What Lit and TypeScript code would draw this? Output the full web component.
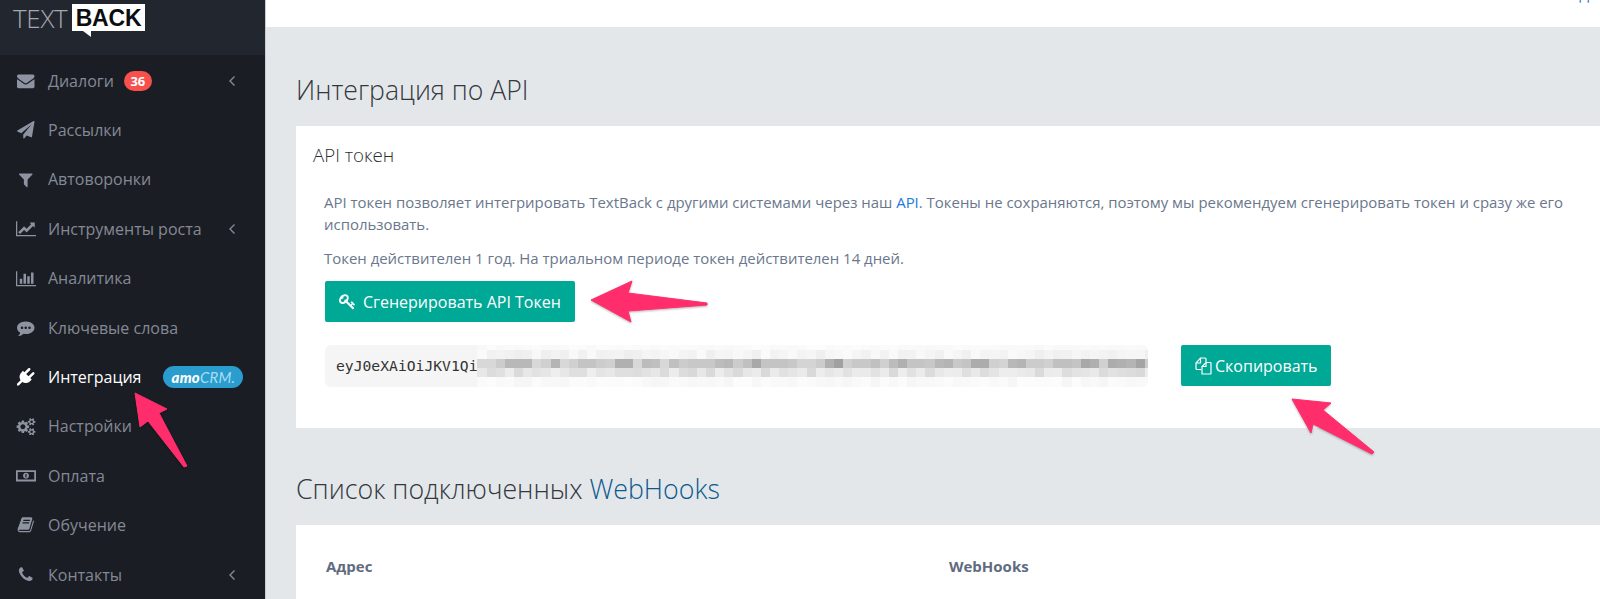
import { LitElement, html, css, svg } from "lit";
import { customElement } from "lit/decorators.js";

const ICONS: Record<string, [number, number, string]> = {
  envelope: [1792, 1792, "M1792 710v794q0 66-47 113t-113 47h-1472q-66 0-113-47t-47-113v-794q44 49 101 87 362 246 497 345 57 42 92.5 65.5t94.5 48 110 24.5h2q51 0 110-24.5t94.5-48 92.5-65.5q170-123 498-345 57-39 100-87zm0-294q0 79-49 151t-122 123q-376 261-468 325-10 7-42.5 30.5t-54 38-52 32.5-57.5 27-50 9h-2q-23 0-50-9t-57.5-27-52-32.5-54-38-42.5-30.5q-91-64-262-182.5t-205-142.5q-62-42-117-115.5t-55-136.5q0-78 41.5-130t118.5-52h1472q65 0 112.5 47t47.5 113z"],
  plane: [1792, 1792, "M1764 11q33 24 27 64l-256 1536q-5 29-32 45-14 8-31 8-11 0-24-5l-453-185-242 295q-18 23-49 23-13 0-22-4-19-7-30.5-23.5t-11.5-36.5v-349l864-1059-1069 925-395-162q-37-14-40-55-2-40 32-59l1664-960q15-9 32-9 20 0 36 11z"],
  filter: [1792, 1792, "M1595 295q17 41-14 70l-493 493v742q0 42-39 59-13 5-25 5-27 0-45-19l-256-256q-19-19-19-45v-486l-493-493q-31-29-14-70 17-39 59-39h1280q42 0 59 39z"],
  line: [2048, 1792, "M2048 1536v128h-2048v-1536h128v1408h1920zm-128-1248v435q0 21-19.5 29.5t-35.5-7.5l-121-121-633 633q-10 10-23 10t-23-10l-233-233-416 416-192-192 585-585q10-10 23-10t23 10l233 233 464-464-121-121q-16-16-7.5-35.5t29.5-19.5h435q14 0 23 9t9 23z"],
  bar: [2048, 1792, "M640 896v512h-256v-512h256zm384-512v1024h-256v-1024h256zm1024 1152v128h-2048v-1536h128v1408h1920zm-640-896v768h-256v-768h256zm384-384v1152h-256v-1152h256z"],
  comment: [1792, 1792, "M640 896q0-53-37.5-90.5t-90.5-37.5-90.5 37.5-37.5 90.5 37.5 90.5 90.5 37.5 90.5-37.5 37.5-90.5zm384 0q0-53-37.5-90.5t-90.5-37.5-90.5 37.5-37.5 90.5 37.5 90.5 90.5 37.5 90.5-37.5 37.5-90.5zm384 0q0-53-37.5-90.5t-90.5-37.5-90.5 37.5-37.5 90.5 37.5 90.5 90.5 37.5 90.5-37.5 37.5-90.5zm384 0q0 174-120 321.5t-326 233-450 85.5q-110 0-211-18-173 173-435 229-52 10-86 13-12 1-22-6t-13-18q-4-15 20-37 5-5 23.5-21.5t25.5-23.5 23.5-25.5 24-31.5 20.5-37 20-48 14.5-57.5 12.5-72.5q-146-90-229.5-216.5t-83.5-269.5q0-174 120-321.5t326-233 450-85.5 450 85.5 326 233 120 321.5z"],
  plug: [1792, 1792, "M1755 453q37 38 37 90.5t-37 90.5l-401 400 150 150-160 160q-163 163-389.5 186.5t-411.5-100.5l-362 362h-181v-181l362-362q-124-185-100.5-411.5t186.5-389.5l160-160 150 150 400-401q38-37 91-37t90 37 37 90.5-37 90.5l-400 401 234 234 401-400q38-37 91-37t90 37z"],
  cogs: [1920, 1792, "M896 896q0-106-75-181t-181-75-181 75-75 181 75 181 181 75 181-75 75-181zm768 512q0-52-38-90t-90-38-90 38-38 90q0 53 37.5 90.5t90.5 37.5 90.5-37.5 37.5-90.5zm0-1024q0-52-38-90t-90-38-90 38-38 90q0 53 37.5 90.5t90.5 37.5 90.5-37.5 37.5-90.5zm-384 421v185q0 10-7 19.5t-16 10.5l-155 24q-11 35-32 76 34 48 90 115 7 11 7 20 0 12-7 19-23 30-82.5 89.5t-78.5 59.5q-11 0-21-7l-115-90q-37 19-77 31-11 108-23 155-7 24-30 24h-186q-11 0-20-7.5t-10-17.5l-23-153q-34-10-75-31l-118 89q-7 7-20 7-11 0-21-8-144-133-144-160 0-9 7-19 10-14 41-53t47-61q-23-44-35-82l-152-24q-10-1-17-9.5t-7-19.5v-185q0-10 7-19.5t16-10.5l155-24q11-35 32-76-34-48-90-115-7-11-7-20 0-12 7-20 22-30 82-89t79-59q11 0 21 7l115 90q34-18 77-32 11-108 23-154 7-24 30-24h186q11 0 20 7.5t10 17.5l23 153q34 10 75 31l118-89q8-7 20-7 11 0 21 8 144 133 144 160 0 8-7 19-12 16-42 54t-45 60q23 48 34 82l152 23q10 2 17 10.5t7 19.5zm640 533v140q0 16-149 31-12 27-30 52 51 113 51 138 0 4-4 7-122 71-124 71-8 0-46-47t-52-68q-20 2-30 2t-30-2q-14 21-52 68t-46 47q-2 0-124-71-4-3-4-7 0-25 51-138-18-25-30-52-149-15-149-31v-140q0-16 149-31 13-29 30-52-51-113-51-138 0-4 4-7 4-2 35-20t59-34 30-16q8 0 46 46.5t52 67.5q20-2 30-2t30 2q51-71 92-112l6-2q4 0 124 70 4 3 4 7 0 25-51 138 17 23 30 52 149 15 149 31zm0-1024v140q0 16-149 31-12 27-30 52 51 113 51 138 0 4-4 7-122 71-124 71-8 0-46-47t-52-68q-20 2-30 2t-30-2q-14 21-52 68t-46 47q-2 0-124-71-4-3-4-7 0-25 51-138-18-25-30-52-149-15-149-31v-140q0-16 149-31 13-29 30-52-51-113-51-138 0-4 4-7 4-2 35-20t59-34 30-16q8 0 46 46.5t52 67.5q20-2 30-2t30 2q51-71 92-112l6-2q4 0 124 70 4 3 4 7 0 25-51 138 17 23 30 52 149 15 149 31z"],
  money: [2048, 1792, "M0 320h2048v1152h-2048zM180 500v792h1688v-792zM1024 590a306 306 0 1 0 .1 0zM960 720h120v352h-120z"],
  book: [1792, 1792, "M1703 478q40 57 18 129l-275 906q-19 64-76.5 107.5t-122.5 43.5h-923q-77 0-148.5-53.5t-99.5-131.5q-24-67-2-127 0-4 3-27t4-37q1-8-3-21.5t-3-19.5q2-11 8-21t16.5-23.5 16.5-23.5q23-38 45-91.5t30-91.5q3-10 .5-30t-.5-28q3-11 17-28t17-23q21-36 42-92t25-90q1-9-2.5-32t.5-28q4-13 22-30.5t22-22.5q19-26 42.5-84.5t27.5-96.5q1-8-3-25.5t-2-26.5q2-8 9-18t18-23 17-21q8-12 16.5-30.5t15-35 16-36 19.5-32 26.5-23.5 36-11.5 47.5 5.5l-1 3q38-9 51-9h761q74 0 114 56t18 130l-274 906q-36 119-71.5 153.5t-128.5 34.5h-869q-27 0-38 15-11 16-1 43 24 70 144 70h923q29 0 56-15.5t35-41.5l300-987q7-22 5-57 38 15 59 43zm-1064 2q-4 13 2 22.5t20 9.5h608q13 0 25.5-9.5t16.5-22.5l21-64q4-13-2-22.5t-20-9.5h-608q-13 0-25.5 9.5t-16.5 22.5zm-83 256q-4 13 2 22.5t20 9.5h608q13 0 25.5-9.5t16.5-22.5l21-64q4-13-2-22.5t-20-9.5h-608q-13 0-25.5 9.5t-16.5 22.5z"],
  phone: [1792, 1792, "M1600 1240q0 27-10 70.5t-21 68.5q-21 50-122 106-94 51-186 51-27 0-53-3.5t-57.5-12.5-47-14.5-55.5-20.5-49-18q-98-35-175-83-127-79-264-216t-216-264q-48-77-83-175-3-9-18-49t-20.5-55.5-14.5-47-12.5-57.5-3.5-53q0-92 51-186 56-101 106-122 25-11 68.5-21t70.5-10q14 0 21 3 18 6 53 76 11 19 30 54t35 63.5 31 53.5q3 4 17.5 25t21.5 35.5 7 28.5q0 20-28.5 50t-62 55-62 53-28.5 46q0 9 5 22.5t8.5 20.5 14 24 11.5 19q76 137 174 235t235 174q2 1 19 11.5t24 14 20.5 8.5 22.5 5q18 0 46-28.5t53-62 55-62 50-28.5q14 0 28.5 7t35.5 21.5 25 17.5q25 15 53.5 31t63.5 35 54 30q70 35 76 53 3 7 3 21z"],
  key: [1792, 1792, "M832 512q0-80-56-136t-136-56-136 56-56 136q0 42 19 83-41-19-83-19-80 0-136 56t-56 136 56 136 136 56 136-56 56-136q0-42-19-83 41 19 83 19 80 0 136-56t56-136zm851 704q0 17-49 66t-66 49q-9 0-28.5-16t-36.5-33-38.5-40-24.5-26l-96 96 220 220q28 28 28 68 0 42-39 81t-81 39q-40 0-68-28l-671-671q-176 131-365 131-163 0-265.5-102.5t-102.5-265.5q0-160 95-313t248-248 313-95q163 0 265.5 102.5t102.5 265.5q0 189-131 365l355 355 96-96q-3-3-26-24.5t-40-38.5-33-36.5-16-28.5q0-17 49-66t66-49q13 0 23 10 6 6 46 44.5t82 79.5 86.5 86 73 78 28.5 41z"],
};

const icon = (name: string, cls = "ic") => {
  const [w, h, d] = ICONS[name];
  const wide = w > 1792 ? " wide" : "";
  return html`<svg class="${cls}${wide}" viewBox="0 0 ${w} ${h}" fill="currentColor" fill-rule="evenodd"><path d=${d}></path></svg>`;
};

type Item = { label: string; icon: string; chev?: boolean; badge?: string; active?: boolean; amo?: boolean };
const ITEMS: Item[] = [
  { label: "Диалоги", icon: "envelope", chev: true, badge: "36" },
  { label: "Рассылки", icon: "plane" },
  { label: "Автоворонки", icon: "filter" },
  { label: "Инструменты роста", icon: "line", chev: true },
  { label: "Аналитика", icon: "bar" },
  { label: "Ключевые слова", icon: "comment" },
  { label: "Интеграция", icon: "plug", active: true, amo: true },
  { label: "Настройки", icon: "cogs" },
  { label: "Оплата", icon: "money" },
  { label: "Обучение", icon: "book" },
  { label: "Контакты", icon: "phone", chev: true },
];

const DARK = "d8,d8,cc,b8,b8,b8,d8,d0,b4,d8,d0,c4,c4,cc,d0,b0,b0,d8,bc,c0,d8,c0,cc,c8,c8,c8,bc,b8,cc,c0,a8,c4,c4,c4,c8,d4,d4,cc,b0,a0,d0,c8,c8,c0,d0,bc,b0,c4,c4,c8,b8,b4,c8,c4,ac,ac,d0,d4,b8,b4,cc,cc,d0,c0,c0,c4,a8,b0,d0,ac,b0,b4,a4,cc".split(",");
const noise = (r: number, c: number) => {
  const x = Math.sin(r * 91.7 + c * 12.9898) * 43758.5453;
  return x - Math.floor(x);
};
const grey = (v: number) => `rgb(${v},${v},${v})`;
const blurRows: string[][] = [
  DARK.map((_, c) => grey(Math.round(248 + noise(0, c) * 4))),
  DARK.map((_, c) => grey(Math.round(238 + noise(1, c) * 12))),
  DARK.map((v) => "#" + v + v + v),
  DARK.map((_, c) => grey(Math.round(216 + noise(3, c) * 22))),
  DARK.map((_, c) => grey(Math.round(246 + noise(4, c) * 6))),
];

@customElement("app-root")
export class AppRoot extends LitElement {
  static styles = css`
    :host {
      display: block;
      position: relative;
      height: 599px;
      width: 1600px;
      overflow: hidden;
      font-family: "Open Sans", sans-serif;
      background: #e4e7ea;
    }
    .layout { display: flex; height: 100%; }
    .side {
      width: 265px;
      flex: none;
      background: #1a1d24;
      border-right: 1px solid #c9ccd1;
      display: flex;
      flex-direction: column;
      overflow: hidden;
    }
    .logo {
      height: 55px;
      flex: none;
      background: #22262e;
      display: flex;
      align-items: flex-start;
      padding: 4px 0 0 13px;
      box-sizing: border-box;
      gap: 7px;
    }
    .logo-text {
      font-weight: 300;
      font-size: 26px;
      line-height: 28px;
      width: 52px;
      color: #a4a7ad;
      letter-spacing: -0.3px;
    }
    .logo-back {
      position: relative;
      background: #fff;
      color: #0c0d10;
      font-family: "Liberation Sans", sans-serif;
      font-weight: 700;
      font-size: 23px;
      line-height: 29px;
      width: 73px;
      height: 27px;
      text-align: center;
      letter-spacing: -0.2px;
    }
    .logo-back::after {
      content: "";
      position: absolute;
      left: 11px;
      top: 27px;
      border-style: solid;
      border-width: 0 8px 6px 0;
      border-color: transparent #fff transparent transparent;
    }
    .nav { display: flex; flex-direction: column; margin-top: 1px; }
    .row {
      height: 49.4px;
      display: flex;
      align-items: center;
      color: #858994;
      font-size: 16px;
      padding-left: 16px;
      position: relative;
    }
    .row.active { color: #fff; }
    .icbox { width: 20px; height: 20px; margin-right: 12px; display: flex; align-items: center; justify-content: center; color: #8e93a1; flex: none; }
    .row.active .icbox { color: #fff; }
    .ic { width: 17.5px; height: 17.5px; display: block; flex: none; }
    .ic.wide { width: 20px; }
    .badge {
      margin-left: 10px;
      background: #f8504d;
      color: #fff;
      font-size: 13px;
      font-weight: 700;
      height: 20px;
      width: 28px;
      border-radius: 10px;
      text-align: center;
      line-height: 20px;
    }
    .chev { position: absolute; left: 228px; top: 50%; margin-top: -6px; width: 8px; height: 12px; stroke: #858994; fill: none; stroke-width: 1.4; }
    .amo {
      margin-left: 22px;
      width: 80px;
      height: 22px;
      border-radius: 11px;
      background: #2a9ccd;
      text-align: center;
      font-family: "Lato", sans-serif;
      font-style: italic;
      font-weight: 900;
      font-size: 15px;
      line-height: 22px;
      color: #fff;
      letter-spacing: 0.2px;
    }
    .amo span { color: #a6def5; font-weight: 400; }

    .main { flex: 1; min-width: 0; display: flex; flex-direction: column; }
    .topbar {
      height: 27px;
      flex: none;
      background: #fff;
      overflow: hidden;
      display: flex;
      justify-content: flex-end;
      padding-right: 11px;
    }
    .topbar a { color: #2a7ab8; font-size: 14px; line-height: 14px; margin-top: -12px; }
    .content { padding-left: 30px; }
    h1 {
      margin: 0;
      font-weight: 300;
      font-size: 26.6px;
      line-height: 36px;
      color: #33383f;
      padding-top: 45px;
      padding-bottom: 18px;
    }
    h1 a { color: #0b5a8e; }
    h1.second { padding-top: 43px; padding-bottom: 18px; font-size: 26.75px; }
    .card { background: #fff; }
    .card.token { height: 302px; box-sizing: border-box; padding: 17px 0 0 17px; }
    .card-title { font-size: 18.7px; line-height: 24px; color: #2c3036; margin-bottom: 24px; font-weight: 300; }
    .card-body { padding: 0 25px 0 11px; font-size: 14.95px; line-height: 22px; color: #6a778c; }
    .card-body p { margin: 0 0 12px; }
    .card-body a { color: #1c7cd6; }
    .btn {
      display: inline-flex;
      align-items: center;
      background: #00a896;
      color: #fff;
      border-radius: 2px;
      font-size: 16px;
      height: 41px;
      box-sizing: border-box;
    }
    .btn.gen { width: 250px; padding-left: 14px; margin-top: 0; margin-left: 1px; }
    .btn.gen .ic { width: 17px; height: 17px; margin-right: 7px; }
    .token-row { display: flex; margin-top: 23px; margin-left: 1px; align-items: flex-start; }
    .field {
      width: 823px;
      height: 42px;
      background: #f5f5f5;
      border-radius: 6px;
      display: flex;
      overflow: hidden;
      flex: none;
      align-items: stretch;
    }
    .mono {
      font-family: "DejaVu Sans Mono", monospace;
      font-size: 14.7px;
      color: #333;
      padding-left: 11px;
      line-height: 42px;
      flex: none;
    }
    .blur { display: flex; flex-direction: column; flex: 1; overflow: hidden; background: #fafafa; }
    .blur-row { display: flex; flex: none; }
    .cell { width: 9.15px; flex: none; }
    .btn.copy { width: 150px; margin-left: 33px; padding-left: 14px; gap: 3px; }
    .copy-ic { width: 17px; height: 18px; stroke: #fff; fill: none; stroke-width: 1.2; flex: none; }
    .card.hooks { height: 80px; padding: 30px 0 0 30px; display: flex; font-size: 15px; font-weight: 700; color: #5f6b80; line-height: 22px; }
    .th1 { width: 623px; }
    .overlay { position: absolute; left: 0; top: 0; width: 1600px; height: 599px; pointer-events: none; }
    .arrow { fill: #ff2d6b; stroke: #ff2d6b; stroke-width: 1; stroke-linejoin: round; filter: drop-shadow(0 1px 1px rgba(0,0,0,.3)); }
  `;

  private renderRow(i: Item) {
    return html`<div class="row ${i.active ? "active" : ""}">
      <span class="icbox">${icon(i.icon)}</span>
      <span>${i.label}</span>
      ${i.badge ? html`<span class="badge">${i.badge}</span>` : ""}
      ${i.amo ? html`<span class="amo">amo<span>CRM.</span></span>` : ""}
      ${i.chev ? html`<svg class="chev" viewBox="0 0 8 12"><path d="M6.5 1.5 L2 6 L6.5 10.5"></path></svg>` : ""}
    </div>`;
  }

  render() {
    const heights = [5, 9, 9, 9, 10];
    return html`
      <div class="layout">
        <aside class="side">
          <div class="logo">
            <span class="logo-text">TEXT</span>
            <span class="logo-back">BACK</span>
          </div>
          <nav class="nav">${ITEMS.map((i) => this.renderRow(i))}</nav>
        </aside>
        <main class="main">
          <div class="topbar"><a>Д</a></div>
          <div class="content">
            <h1>Интеграция по API</h1>
            <section class="card token">
              <div class="card-title">API токен</div>
              <div class="card-body">
                <p>API токен позволяет интегрировать TextBack с другими системами через наш <a>API</a>. Токены не сохраняются, поэтому мы рекомендуем сгенерировать токен и сразу же его использовать.</p>
                <p>Токен действителен 1 год. На триальном периоде токен действителен 14 дней.</p>
                <div class="btn gen">${icon("key")}<span>Сгенерировать API Токен</span></div>
                <div class="token-row">
                  <div class="field">
                    <span class="mono">eyJ0eXAiOiJKV1Qi</span>
                    <div class="blur">
                      ${blurRows.map(
                        (row, r) => html`<div class="blur-row" style="height:${heights[r]}px">
                          ${row.map((c) => html`<div class="cell" style="background:${c}"></div>`)}
                        </div>`
                      )}
                    </div>
                  </div>
                  <div class="btn copy">
                    <svg class="copy-ic" viewBox="0 0 17 18">
                      <path d="M6 12.5H2a1 1 0 0 1-1-1V6l4.5-5H10a1 1 0 0 1 1 1v3"></path>
                      <path d="M5.5 1v5H1"></path>
                      <path d="M7 17V9.5L11 5.5h4.5a.5.5 0 0 1 .5.5v10.5a.5.5 0 0 1-.5.5z"></path>
                      <path d="M11 5.5V9.5H7"></path>
                    </svg>
                    <span>Скопировать</span>
                  </div>
                </div>
              </div>
            </section>
            <h1 class="second">Список подключенных <a>WebHooks</a></h1>
            <section class="card hooks">
              <div class="th1">Адрес</div>
              <div>WebHooks</div>
            </section>
          </div>
        </main>
      </div>
      <svg class="overlay" viewBox="0 0 1600 599">
        ${svg`<polygon class="arrow" points="135,393 167,409 159,413 187,466 184,467 148,421 140,427"></polygon>
        <polygon class="arrow" points="591,300 632,281 628,293 707,303 707,305 628,311 631,322"></polygon>
        <polygon class="arrow" points="1292,399 1331,403 1323,410 1374,452 1372,454 1313,424 1311,433"></polygon>`}
      </svg>
    `;
  }
}
